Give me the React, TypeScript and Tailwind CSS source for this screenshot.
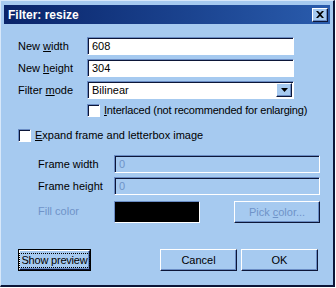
const sunken =
  "border border-t-[#6a8cc4] border-l-[#6a8cc4] border-b-white border-r-white shadow-[inset_1px_1px_0_#0c1638]";
const raised =
  "border border-t-white border-l-white border-b-[#0c1638] border-r-[#0c1638] shadow-[inset_-1px_-1px_0_#6a8cc4]";

function Field({ value, disabled }: { value: string; disabled?: boolean }) {
  return (
    <div
      className={`h-[18px] flex items-center pl-[4px] ${sunken} ${
        disabled ? "bg-[#a6caf0] text-[#6f93c8]" : "bg-white text-black"
      }`}
    >
      {value}
    </div>
  );
}

function Check({ children }: { children: React.ReactNode }) {
  return (
    <div className="flex items-center gap-[4px] whitespace-nowrap">
      <div className={`w-[13px] h-[13px] shrink-0 bg-white ${sunken}`} />
      <span>{children}</span>
    </div>
  );
}

export default function App() {
  return (
    <div className="w-[336px] h-[288px] bg-white">
      <div className="w-[335px] h-[287px] bg-[#a6caf0] border-t border-l border-t-[#d8e8fa] border-l-[#d8e8fa] border-r-2 border-b-2 border-r-[#0c1638] border-b-[#0c1638] p-[3px] pt-[4px] text-[11px] leading-none font-['Liberation_Sans',sans-serif] text-black whitespace-nowrap">
        {/* title bar */}
        <div className="h-[19px] flex items-center justify-between pl-[4px] pr-[2px] bg-gradient-to-r from-[#0a246a] to-[#2a5cad]">
          <span className="text-white font-bold text-[12px]">Filter: resize</span>
          <div className={`w-[16px] h-[14px] bg-[#a6caf0] flex items-center justify-center ${raised}`}>
            <svg width="8" height="7" viewBox="0 0 8 7">
              <path d="M0 0h2l2 2 2-2h2L5 3.5 8 7H6L4 5 2 7H0l3-3.5z" fill="#000" />
            </svg>
          </div>
        </div>

        <div className="pl-[14px] pr-[12px] pt-[13px]">
          <div className="grid grid-cols-[69px_207px] gap-y-[4px] items-center">
            <span>
              New <u>w</u>idth
            </span>
            <Field value="608" />
            <span>
              New <u>h</u>eight
            </span>
            <Field value="304" />
            <span>
              Filter <u>m</u>ode
            </span>
            <div className={`h-[18px] flex items-center bg-white ${sunken}`}>
              <span className="flex-1 pl-[4px]">Bilinear</span>
              <div className={`w-[16px] h-[14px] mr-[1px] bg-[#a6caf0] flex items-center justify-center ${raised}`}>
                <svg width="7" height="4" viewBox="0 0 7 4">
                  <path d="M0 0h7L3.5 4z" fill="#000" />
                </svg>
              </div>
            </div>
            <span />
            <div className="mt-[1px] tracking-[-0.2px]">
              <Check>
                <u>I</u>nterlaced (not recommended for enlarging)
              </Check>
            </div>
          </div>

          <div className="mt-[12px]">
            <Check>
              <u>E</u>xpand frame and letterbox image
            </Check>
          </div>

          <div className="mt-[13px] pl-[20px] grid grid-cols-[76px_206px] gap-y-[4px] items-center">
            <span>Frame width</span>
            <Field value="0" disabled />
            <span>Frame height</span>
            <Field value="0" disabled />
            <span className="text-[#6f93c8]">Fill color</span>
            <div className="flex items-center justify-between mt-[2px]">
              <div className="w-[86px] h-[22px] bg-black border border-t-[#6a8cc4] border-l-[#6a8cc4] border-b-white border-r-white" />
              <div className={`w-[86px] h-[22px] flex items-center justify-center text-[#6f93c8] ${raised}`}>
                <span>
                  Pick <u>c</u>olor...
                </span>
              </div>
            </div>
          </div>

          <div className="mt-[26px] flex items-center">
            <div className="w-[73px] h-[22px] border border-black">
              <div className={`w-full h-full flex items-center justify-center ${raised}`}>
                <span className="outline outline-1 outline-dotted outline-black px-[1px] py-[1px] tracking-[-0.2px]">
                  Show preview
                </span>
              </div>
            </div>
            <div className="flex-1" />
            <div className={`w-[77px] h-[22px] flex items-center justify-center ${raised}`}>Cancel</div>
            <div className={`w-[77px] h-[22px] ml-[4px] flex items-center justify-center ${raised}`}>OK</div>
          </div>
        </div>
      </div>
    </div>
  );
}
